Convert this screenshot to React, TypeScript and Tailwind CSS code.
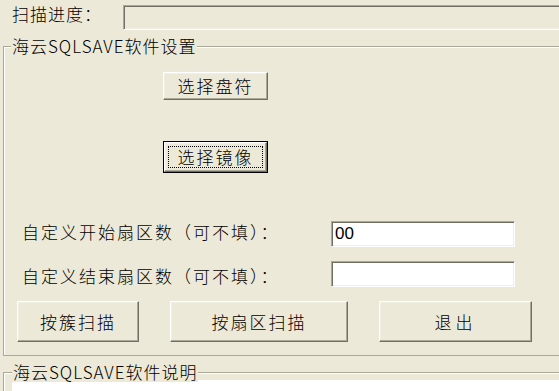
import React from 'react';

const face = "font-['Noto_Sans_CJK_SC','Noto_Sans',sans-serif] font-light";

// classic raised 3D button
function RaisedButton({ label, className = '', focused = false }: { label: string; className?: string; focused?: boolean }) {
  if (focused) {
    return (
      <div className={`border border-black ${className}`}>
        <div className="w-full h-full flex border border-t-white border-l-white border-r-[#716F64] border-b-[#716F64] shadow-[inset_-1px_-1px_0_#ACA899,inset_1px_1px_0_#F1EFE2] bg-[#ECE9D8] p-[3px]">
          <div className="flex-1 flex items-center justify-center border border-dotted border-black text-[17px] leading-[20px] tracking-[2px] text-black">
            {label}
          </div>
        </div>
      </div>
    );
  }
  return (
    <button
      className={`flex items-center justify-center border border-t-white border-l-white border-r-[#716F64] border-b-[#716F64] shadow-[inset_-1px_-1px_0_#ACA899,inset_1px_1px_0_#F1EFE2] bg-[#ECE9D8] text-[17px] leading-[20px] text-black ${className}`}
    >
      {label}
    </button>
  );
}

function Edit({ value, className = '' }: { value: string; className?: string }) {
  return (
    <div
      className={`flex items-center bg-white border border-t-[#ACA899] border-l-[#ACA899] border-r-white border-b-white shadow-[inset_1px_1px_0_#716F64,inset_-1px_-1px_0_#F1EFE2] pl-[3px] font-['Liberation_Sans',sans-serif] font-normal text-[17px] text-black ${className}`}
    >
      {value}
    </div>
  );
}

export default function App() {
  return (
    <div className={`w-[559px] h-[391px] overflow-hidden bg-[#ECE9D8] text-black ${face}`}>
      {/* progress row */}
      <div className="flex items-start pt-[4px]">
        <div className="w-[123px] pl-[12px] text-[17px] leading-[20px] tracking-[1px] shrink-0">扫描进度：</div>
        <div className="mt-[1px] h-[25px] w-[460px] shrink-0 border border-t-[#ACA899] border-l-[#ACA899] border-r-white border-b-white shadow-[inset_1px_1px_0_#716F64,inset_-1px_-1px_0_#F1EFE2]" />
      </div>

      {/* settings group */}
      <fieldset className="mt-[6px] ml-[3px] w-[600px] border border-[#ACA899] shadow-[inset_1px_1px_0_#fff] pb-[13px]">
        <legend className="ml-[7px] px-[1px] bg-[#ECE9D8] text-[17px] leading-[20px] tracking-[1px]">海云SQLSAVE软件设置</legend>
        <div className="flex flex-col">
          <RaisedButton label="选择盘符" className="mt-[16px] ml-[159px] w-[105px] h-[28px] tracking-[2px]" />
          <RaisedButton label="选择镜像" focused className="mt-[41px] ml-[159px] w-[105px] h-[32px]" />

          <div className="mt-[48px] flex items-center">
            <div className="w-[327px] pl-[18px] text-[17px] leading-[20px] tracking-[2px] -mt-[5px]">自定义开始扇区数（可不填）：</div>
            <Edit value="00" className="w-[184px] h-[26px]" />
          </div>
          <div className="mt-[14px] flex items-center">
            <div className="w-[327px] pl-[18px] text-[17px] leading-[20px] tracking-[2px] mt-[3px]">自定义结束扇区数（可不填）：</div>
            <Edit value="" className="w-[184px] h-[26px]" />
          </div>

          <div className="mt-[14px] ml-[13px] flex gap-[31px]">
            <RaisedButton label="按簇扫描" className="w-[122px] h-[41px] tracking-[2px]" />
            <RaisedButton label="按扇区扫描" className="w-[178px] h-[41px] tracking-[2px]" />
            <RaisedButton label="退出" className="w-[153px] h-[41px] tracking-[4px]" />
          </div>
        </div>
      </fieldset>

      {/* description group */}
      <div className="relative mt-[16px] ml-[3px] w-[600px] h-[80px] border-t border-l border-[#ACA899] shadow-[inset_1px_1px_0_#fff]">
        <span className="absolute -top-[11px] left-[8px] z-10 px-[1px] bg-[#ECE9D8] text-[17px] leading-[20px] tracking-[1px]">海云SQLSAVE软件说明</span>
        <div className="mt-[7px] ml-[8px] h-[60px] bg-white" />
      </div>
    </div>
  );
}
